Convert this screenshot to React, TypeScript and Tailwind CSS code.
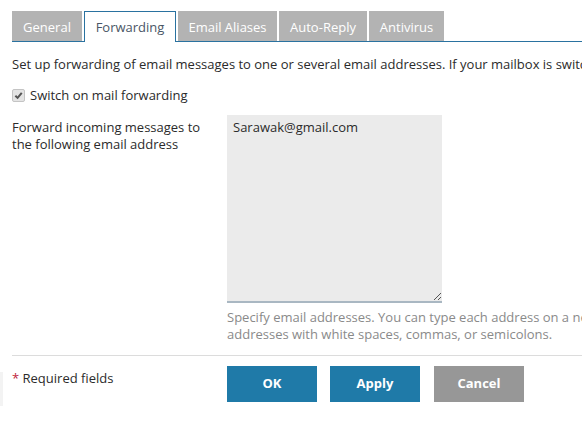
import React from 'react';

/**
 * Mail settings - Forwarding tab
 */
const tabs = [
  { label: 'General', w: 'w-[70px]' },
  { label: 'Forwarding', w: 'w-[92px]', active: true },
  { label: 'Email Aliases', w: 'w-[99px]' },
  { label: 'Auto-Reply', w: 'w-[88px]' },
  { label: 'Antivirus', w: 'w-[75px]' },
];

function CheckBox(): JSX.Element {
  return (
    <span className="inline-flex h-[13px] w-[13px] items-center justify-center rounded-[2px] border border-[#c4c4c4] bg-[#e4e4e4]">
      <svg width="9" height="9" viewBox="0 0 10 10" fill="none" stroke="#555" strokeWidth="2.2">
        <path d="M1.5 5.2 4 7.6 8.6 2" />
      </svg>
    </span>
  );
}

export default function App(): JSX.Element {
  return (
    <div className="relative h-[423px] w-[582px] overflow-hidden bg-white pl-[12px] pt-[11px] font-['Open_Sans',sans-serif] text-[13px] text-[#2b2b2b]">
      {/* Tabs */}
      <div className="flex h-[31px] items-stretch gap-[2px] border-b border-[#2a72a0]">
        {tabs.map((t) =>
          t.active ? (
            <div
              key={t.label}
              className={`${t.w} -mb-px flex items-center justify-center border border-b-0 border-[#2a72a0] bg-white pt-[2px] text-[#4a5666]`}
            >
              {t.label}
            </div>
          ) : (
            <div
              key={t.label}
              className={`${t.w} flex items-center justify-center bg-[#b3b3b3] pt-[3px] text-white`}
            >
              {t.label}
            </div>
          )
        )}
      </div>

      <p className="mt-[13px] whitespace-nowrap leading-[18px]">
        Set up forwarding of email messages to one or several email addresses. If your mailbox is switched off, all messages will be forwarded.
      </p>

      <label className="mt-[13px] flex items-center gap-[5px] leading-[18px]">
        <CheckBox />
        <span>Switch on mail forwarding</span>
      </label>

      {/* Address field */}
      <div className="mt-[11px] flex">
        <div className="w-[215px] shrink-0 pt-[4px] leading-[17px]">
          Forward incoming messages to
          <br />
          the following email address
        </div>
        <div className="shrink-0">
          <div className="relative h-[188px] w-[215px] border-b-2 border-[#a9b7c2] bg-[#ebebeb] px-[6px] pt-[4px] leading-[17px]">
            Sarawak@gmail.com
            <svg className="absolute bottom-[1px] right-[1px]" width="8" height="8" viewBox="0 0 8 8" stroke="#555" strokeWidth="1">
              <path d="M1 8 8 1M5 8 8 5" />
            </svg>
          </div>
          <div className="mt-[6px] whitespace-nowrap leading-[17px] text-[#8a8a8a]">
            Specify email addresses. You can type each address on a new line or separate
            <br />
            addresses with white spaces, commas, or semicolons.
          </div>
        </div>
      </div>

      <div className="mt-[12px] h-px bg-[#dcdcdc]" />

      {/* Footer */}
      <div className="mt-[10px] flex">
        <div className="w-[215px] shrink-0 pt-[3px] leading-[18px]">
          <span className="text-[#c0233a]">*</span> Required fields
        </div>
        <div className="flex shrink-0">
          <button className="h-[36px] w-[90px] bg-[#1f7aa8] font-bold text-white">OK</button>
          <button className="ml-[13px] h-[36px] w-[90px] bg-[#1f7aa8] font-bold text-white">Apply</button>
          <button className="ml-[14px] h-[36px] w-[90px] bg-[#979797] font-bold text-white">Cancel</button>
        </div>
      </div>

      <div className="absolute left-0 top-[372px] h-[34px] w-[3px] bg-[#f3f3f3]" />
    </div>
  );
}
